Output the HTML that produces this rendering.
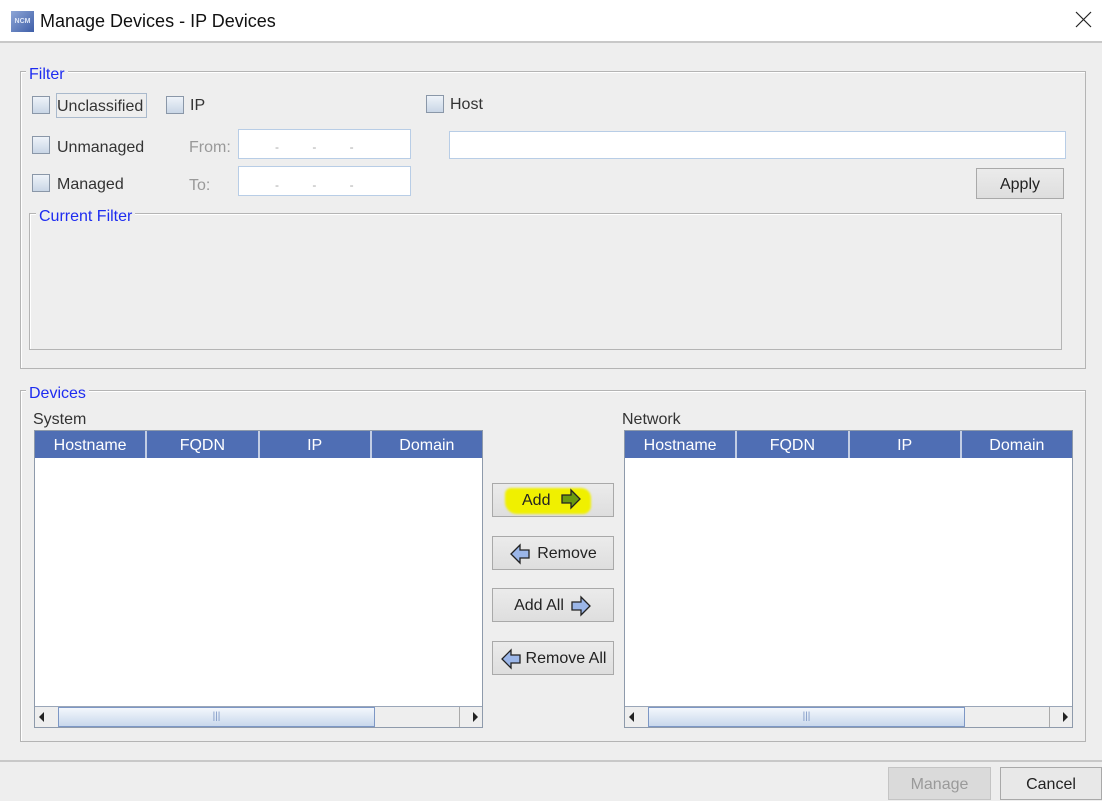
<!DOCTYPE html>
<html><head><meta charset="utf-8">
<style>
*{box-sizing:border-box;margin:0;padding:0}
body{width:1102px;height:801px;background:#eeeeee;font-family:"Liberation Sans",sans-serif;font-size:16px;color:#333;position:relative;overflow:hidden}
.a{position:absolute}
.grp{position:absolute;border:1px solid #b4b4b4;box-shadow:1px 1px 0 #fff inset}
.lbl{position:absolute;background:#eeeeee;color:#1e2cf0;padding:0 3px;font-size:16px;line-height:17px}
.cb{position:absolute;width:18px;height:18px;border:1px solid #8a97a8;background:linear-gradient(#eef3f9,#c9d6e6)}
.t{position:absolute;line-height:18px;white-space:nowrap}
.fld{position:absolute;background:#fff;border:1px solid #b8cde6}
.dot{position:absolute;color:#aaa;font-size:12px}
.btn{position:absolute;border:1px solid #a9a9a9;background:linear-gradient(#ebebeb,#dedede);display:flex;align-items:center;justify-content:center;font-size:16px;color:#222;gap:6px;padding-top:2px}
.tbl{position:absolute;background:#fff;border:1px solid #8e9aab}
.hd{position:absolute;top:0;left:0;right:0;height:27px;background:#4f6eb4;display:flex}
.hd div{flex:1;color:#fff;text-align:center;line-height:30px;border-right:2px solid #c2cde4;font-size:16px}
.hd div:last-child{border-right:none}
.sb{position:absolute;left:0;right:0;bottom:0;height:21px;background:#eeeeee;border-top:1px solid #9aa6b8}
</style></head><body>
<div class="a" style="left:0;top:0;width:1102px;height:43px;background:#fff;border-bottom:2px solid #c8c8c8"></div>
<div class="a" style="left:11px;top:11px;width:23px;height:21px;background:linear-gradient(135deg,#8ea6d6,#3e5ea8);color:#dfe7f7;font-size:7px;font-weight:bold;line-height:21px;text-align:center">NCM</div>
<div class="t" style="left:40px;top:11px;font-size:18px;color:#111;line-height:20px">Manage Devices - IP Devices</div>
<svg class="a" style="left:1075px;top:11px" width="17" height="17"><path d="M1 1L16 16M16 1L1 16" stroke="#222" stroke-width="1.2"/></svg>

<div class="grp" style="left:20px;top:71px;width:1066px;height:298px"></div>
<div class="lbl" style="left:26px;top:66px">Filter</div>
<div class="cb" style="left:32px;top:96px"></div>
<div class="a" style="left:56px;top:93px;width:91px;height:25px;border:1px solid #a9b9cc"></div>
<div class="t" style="left:57px;top:98px">Unclassified</div>
<div class="cb" style="left:166px;top:96px"></div><div class="t" style="left:190px;top:97px">IP</div>
<div class="cb" style="left:426px;top:95px"></div><div class="t" style="left:450px;top:96px">Host</div>
<div class="cb" style="left:32px;top:136px"></div><div class="t" style="left:57px;top:139px">Unmanaged</div>
<div class="cb" style="left:32px;top:174px"></div><div class="t" style="left:57px;top:176px">Managed</div>
<div class="t" style="left:189px;top:139px;color:#999">From:</div>
<div class="t" style="left:189px;top:177px;color:#999">To:</div>
<div class="fld" style="left:238px;top:129px;width:173px;height:30px"></div>
<div class="fld" style="left:238px;top:166px;width:173px;height:30px"></div>
<div class="dot" style="left:275px;top:140px">-&nbsp;&nbsp;&nbsp;&nbsp;&nbsp;&nbsp;&nbsp;&nbsp;&nbsp;&nbsp;-&nbsp;&nbsp;&nbsp;&nbsp;&nbsp;&nbsp;&nbsp;&nbsp;&nbsp;&nbsp;-</div>
<div class="dot" style="left:275px;top:178px">-&nbsp;&nbsp;&nbsp;&nbsp;&nbsp;&nbsp;&nbsp;&nbsp;&nbsp;&nbsp;-&nbsp;&nbsp;&nbsp;&nbsp;&nbsp;&nbsp;&nbsp;&nbsp;&nbsp;&nbsp;-</div>
<div class="fld" style="left:449px;top:131px;width:617px;height:28px"></div>
<div class="btn" style="left:976px;top:168px;width:88px;height:31px">Apply</div>
<div class="grp" style="left:29px;top:213px;width:1033px;height:137px"></div>
<div class="lbl" style="left:36px;top:208px">Current Filter</div>

<div class="grp" style="left:20px;top:390px;width:1066px;height:352px"></div>
<div class="lbl" style="left:26px;top:385px">Devices</div>
<div class="t" style="left:33px;top:411px">System</div>
<div class="t" style="left:622px;top:411px">Network</div>

<div class="tbl" style="left:34px;top:430px;width:449px;height:298px">
<div class="hd"><div>Hostname</div><div>FQDN</div><div>IP</div><div>Domain</div></div>
<div class="sb"><div class="a" style="left:4px;top:5px;width:0;height:0;border:5px solid transparent;border-right:5px solid #222;border-left:0"></div>
<div class="a" style="left:23px;top:0;width:317px;height:20px;background:linear-gradient(#f3f7fc,#c9d8ec);border:1px solid #7d97c5;text-align:center;font-size:10px;color:#7d97c5;line-height:18px">|||</div>
<div class="a" style="left:424px;top:0;width:1px;height:20px;background:#aaa"></div>
<div class="a" style="right:4px;top:5px;width:0;height:0;border:5px solid transparent;border-left:5px solid #222;border-right:0"></div></div>
</div>
<div class="tbl" style="left:624px;top:430px;width:449px;height:298px">
<div class="hd"><div>Hostname</div><div>FQDN</div><div>IP</div><div>Domain</div></div>
<div class="sb"><div class="a" style="left:4px;top:5px;width:0;height:0;border:5px solid transparent;border-right:5px solid #222;border-left:0"></div>
<div class="a" style="left:23px;top:0;width:317px;height:20px;background:linear-gradient(#f3f7fc,#c9d8ec);border:1px solid #7d97c5;text-align:center;font-size:10px;color:#7d97c5;line-height:18px">|||</div>
<div class="a" style="left:424px;top:0;width:1px;height:20px;background:#aaa"></div>
<div class="a" style="right:4px;top:5px;width:0;height:0;border:5px solid transparent;border-left:5px solid #222;border-right:0"></div></div>
</div>

<div class="btn" style="left:492px;top:483px;width:122px;height:34px"></div>
<div class="a" style="left:505px;top:488px;width:86px;height:26px;background:#f0f000;border-radius:6px 10px 8px 12px;filter:blur(1px)"></div>
<div class="t" style="left:522px;top:492px;font-size:16px;color:#222">Add</div>
<svg class="a" style="left:560px;top:488px" width="22" height="22"><path d="M2 7H11V2L20 11L11 20V15H2Z" fill="#6a9a10" stroke="#222" stroke-width="1.3"/></svg>
<div class="btn" style="left:492px;top:536px;width:122px;height:34px"><svg width="22" height="22"><path d="M20 7H11V2L2 11L11 20V15H20Z" fill="#9bb6e8" stroke="#222" stroke-width="1.3"/></svg>Remove</div>
<div class="btn" style="left:492px;top:588px;width:122px;height:34px">Add All<svg width="22" height="22"><path d="M2 7H11V2L20 11L11 20V15H2Z" fill="#9bb6e8" stroke="#222" stroke-width="1.3"/></svg></div>
<div class="btn" style="left:492px;top:641px;width:122px;height:34px;gap:4px"><svg width="22" height="22"><path d="M20 7H11V2L2 11L11 20V15H20Z" fill="#9bb6e8" stroke="#222" stroke-width="1.3"/></svg>Remove All</div>

<div class="a" style="left:0;top:760px;width:1102px;height:2px;background:#c8c8c8"></div>
<div class="btn" style="left:888px;top:767px;width:103px;height:33px;background:#dadada;color:#9a9a9a;border-color:#c4c4c4">Manage</div>
<div class="btn" style="left:1000px;top:767px;width:102px;height:33px;background:#e8e8e8">Cancel</div>
</body></html>
